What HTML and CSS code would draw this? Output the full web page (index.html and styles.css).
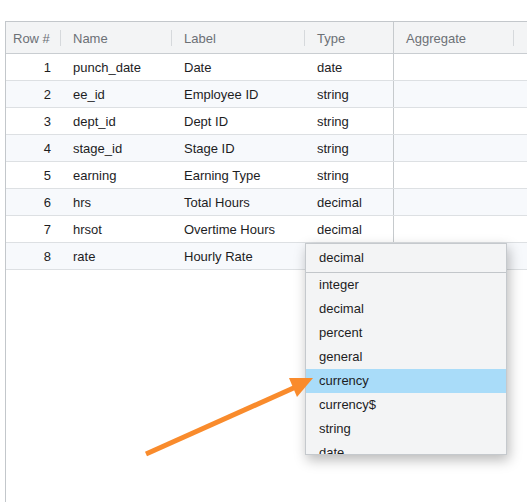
FILE: index.html
```html
<!DOCTYPE html>
<html>
<head>
<meta charset="utf-8">
<link rel="stylesheet" href="styles.css">
</head>
<body>
<div class="page">
  <div class="grid">
    <div class="row head">
      <div class="cell num sep">Row #</div>
      <div class="cell sep">Name</div>
      <div class="cell sep">Label</div>
      <div class="cell">Type</div>
      <div class="cell agg sep">Aggregate</div>
      <div class="cell"></div>
    </div>
    <div class="row"><div class="cell num">1</div><div class="cell">punch_date</div><div class="cell">Date</div><div class="cell">date</div><div class="cell agg"></div><div class="cell"></div></div>
    <div class="row alt"><div class="cell num">2</div><div class="cell">ee_id</div><div class="cell">Employee ID</div><div class="cell">string</div><div class="cell agg"></div><div class="cell"></div></div>
    <div class="row"><div class="cell num">3</div><div class="cell">dept_id</div><div class="cell">Dept ID</div><div class="cell">string</div><div class="cell agg"></div><div class="cell"></div></div>
    <div class="row alt"><div class="cell num">4</div><div class="cell">stage_id</div><div class="cell">Stage ID</div><div class="cell">string</div><div class="cell agg"></div><div class="cell"></div></div>
    <div class="row"><div class="cell num">5</div><div class="cell">earning</div><div class="cell">Earning Type</div><div class="cell">string</div><div class="cell agg"></div><div class="cell"></div></div>
    <div class="row alt"><div class="cell num">6</div><div class="cell">hrs</div><div class="cell">Total Hours</div><div class="cell">decimal</div><div class="cell agg"></div><div class="cell"></div></div>
    <div class="row"><div class="cell num">7</div><div class="cell">hrsot</div><div class="cell">Overtime Hours</div><div class="cell">decimal</div><div class="cell agg"></div><div class="cell"></div></div>
    <div class="row alt"><div class="cell num">8</div><div class="cell">rate</div><div class="cell">Hourly Rate</div><div class="cell"></div><div class="cell agg"></div><div class="cell"></div></div>
  </div>

  <div class="dropdown">
    <div class="dd-current">decimal</div>
    <ul class="dd-list">
      <li>integer</li>
      <li>decimal</li>
      <li>percent</li>
      <li>general</li>
      <li class="active">currency</li>
      <li>currency$</li>
      <li>string</li>
      <li>date</li>
    </ul>
  </div>

  <svg class="arrow" width="527" height="502" viewBox="0 0 527 502">
    <line x1="146" y1="454" x2="298" y2="386" stroke="#f98b2c" stroke-width="5"/>
    <polygon points="313,378 297,397 289,378" fill="#f98b2c"/>
  </svg>
</div>
</body>
</html>
```

FILE: styles.css
```css
html, body {
  margin: 0;
  padding: 0;
  background: #ffffff;
}
.page {
  position: relative;
  width: 527px;
  height: 502px;
  overflow: hidden;
  font-family: "Liberation Sans", Arial, sans-serif;
  font-size: 13px;
  color: #1d1d1f;
}
.grid {
  margin: 21px 0 0 5px;
  border-left: 1px solid #c3c7cb;
  border-top: 1px solid #c3c7cb;
  height: 481px;
}
.row {
  display: grid;
  grid-template-columns: 55px 111px 133px 88px 121px 1fr;
  height: 26px;
  border-bottom: 1px solid #dde0e3;
  background: #ffffff;
}
.row.alt {
  background: #f7f9fc;
}
.row.head {
  height: 31px;
  background: #f3f4f5;
  border-bottom: 1px solid #c9cdd1;
  color: #6c7075;
}
.cell {
  position: relative;
  display: flex;
  align-items: center;
  padding-left: 12px;
  padding-top: 1px;
  white-space: nowrap;
  overflow: hidden;
}
.cell.num {
  justify-content: flex-end;
  padding-left: 0;
  padding-right: 10px;
}
.head .cell.num {
  justify-content: flex-start;
  padding-left: 7px;
}
.cell.agg {
  border-left: 1px solid #c6cacd;
  padding-left: 12px;
}
.head .cell.sep::after {
  content: "";
  position: absolute;
  right: 0;
  top: 8px;
  width: 1px;
  height: 16px;
  background: #d6d9dc;
}
.dropdown {
  position: absolute;
  left: 305px;
  top: 243px;
  width: 200px;
  height: 210px;
  background: #f3f4f5;
  border: 1px solid #c5c9cd;
  box-shadow: 2px 5px 12px rgba(0, 0, 0, 0.28);
  overflow: hidden;
}
.dd-current {
  height: 28px;
  line-height: 28px;
  padding-left: 13px;
  border-bottom: 1px solid #c2c6ca;
}
.dd-list {
  list-style: none;
  margin: 0;
  padding: 0;
}
.dd-list li {
  height: 24px;
  line-height: 24px;
  padding-left: 13px;
}
.dd-list li.active {
  background: #a9dcf9;
}
.arrow {
  position: absolute;
  left: 0;
  top: 0;
}
```
